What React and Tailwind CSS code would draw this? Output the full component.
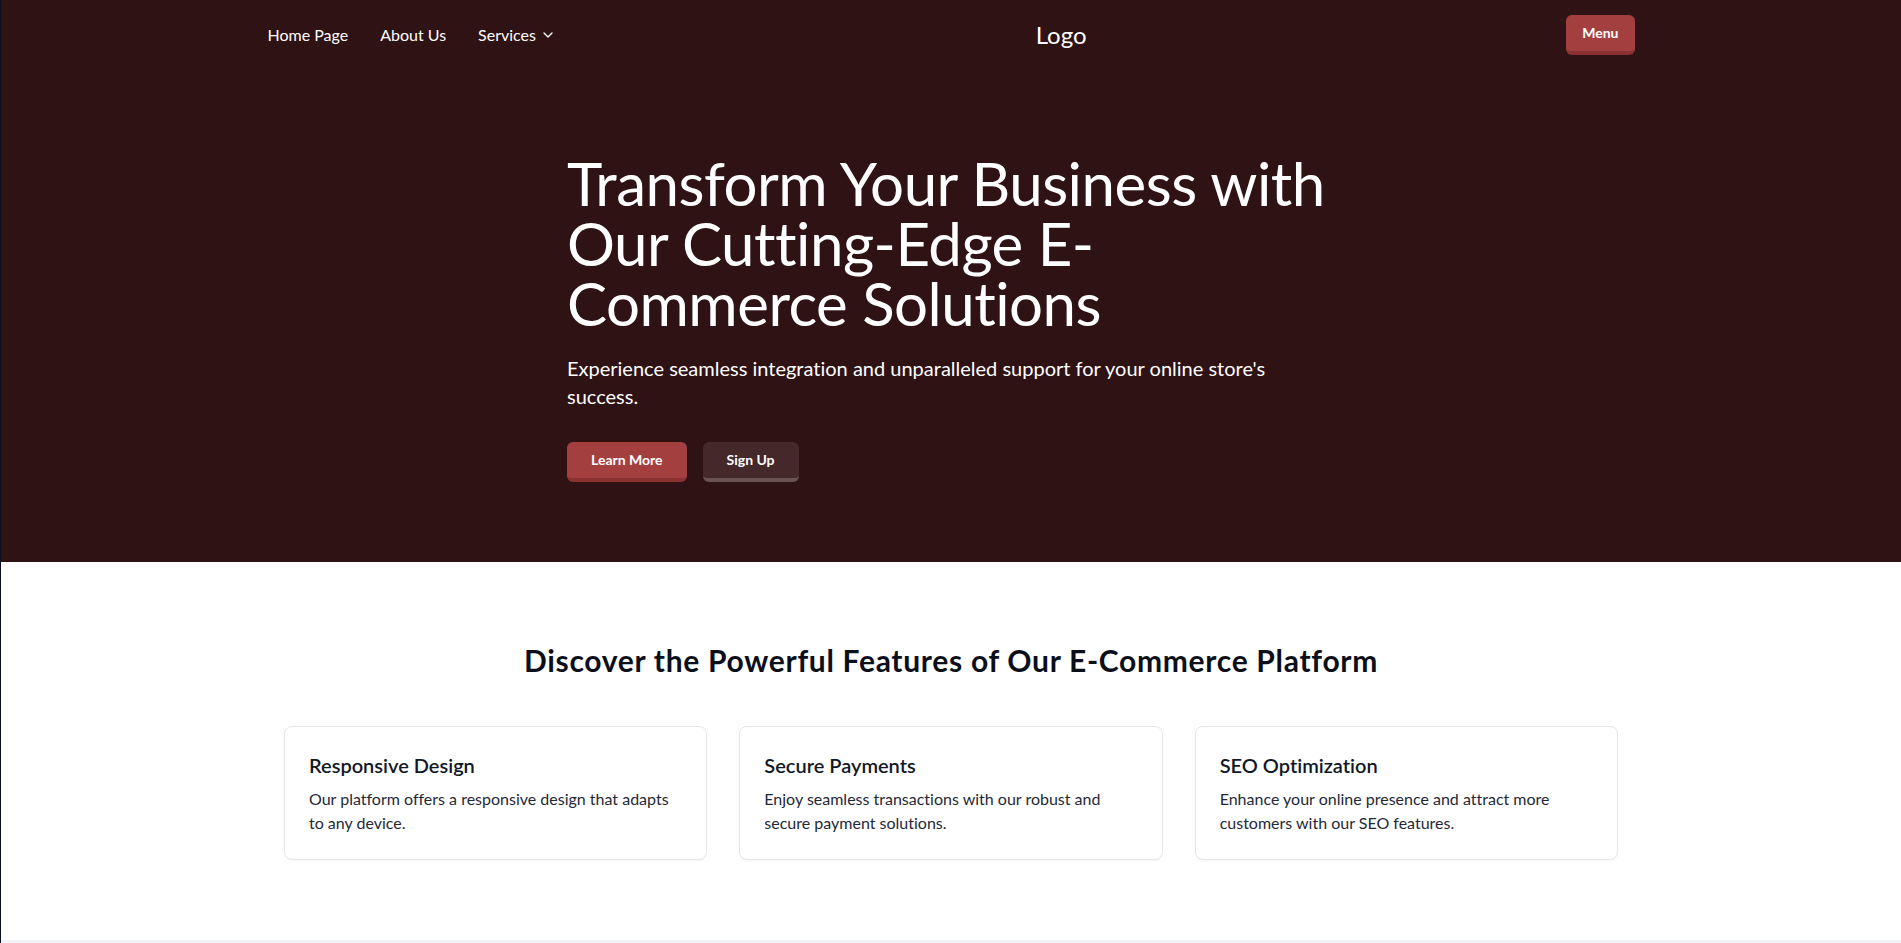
import React from "react";
import { ChevronDown } from "lucide-react";

const features = [
  {
    title: "Responsive Design",
    text: "Our platform offers a responsive design that adapts to any device.",
  },
  {
    title: "Secure Payments",
    text: "Enjoy seamless transactions with our robust and secure payment solutions.",
  },
  {
    title: "SEO Optimization",
    text: "Enhance your online presence and attract more customers with our SEO features.",
  },
];

export default function App() {
  return (
    <div
      className="min-h-screen border-l border-[#0b1020] bg-white [font-variant-ligatures:none]"
      style={{ fontFamily: "Lato, 'Noto Sans', sans-serif" }}
    >
      <header className="bg-[#2e1214] text-white">
        <nav className="mx-auto flex h-[70px] max-w-[1367px] items-center justify-between">
          <div className="flex items-center gap-8 text-base">
            <a href="#" className="text-white">Home Page</a>
            <a href="#" className="text-white">About Us</a>
            <button className="flex items-center text-white">
              Services
              <ChevronDown className="ml-1 h-4 w-4" strokeWidth={2} />
            </button>
          </div>
          <div className="text-2xl text-white">Logo</div>
          <button className="rounded-md border-b-4 border-[#8b3132] bg-[#a43f40] px-4 py-2 text-sm font-bold leading-5 text-white">
            Menu
          </button>
        </nav>

        <section className="mx-auto max-w-3xl pb-20 pt-[83px]">
          <h1 className="mb-[21px] text-6xl leading-none tracking-[-0.5px] text-white">
            Transform Your Business with Our Cutting-Edge E-Commerce Solutions
          </h1>
          <p className="text-xl leading-7 text-white">
            Experience seamless integration and unparalleled support for your online store's success.
          </p>
          <div className="mt-8 flex gap-4">
            <button className="rounded-md border-b-4 border-[#8b3132] bg-[#a43f40] px-6 py-2 text-sm font-bold leading-5 text-white">
              Learn More
            </button>
            <button className="rounded-md border-b-4 border-[#6b5353] bg-[#45282a] px-6 py-2 text-sm font-bold leading-5 text-white">
              Sign Up
            </button>
          </div>
        </section>
      </header>

      <section className="bg-white py-20">
        <h2 className="mb-12 text-center text-3xl font-bold leading-9 tracking-[0.7px] text-[#0b0f1a]">
          Discover the Powerful Features of Our E-Commerce Platform
        </h2>
        <div className="mx-auto grid max-w-[1334px] grid-cols-3 gap-8">
          {features.map((f) => (
            <div
              key={f.title}
              className="rounded-lg border border-[#e5e7eb] bg-white p-6 shadow-[0_1px_2px_rgba(0,0,0,0.04)]"
            >
              <h3 className="mb-2 text-xl font-semibold leading-7 text-[#111827]">{f.title}</h3>
              <p className="text-base leading-6 text-[#1f2937]">{f.text}</p>
            </div>
          ))}
        </div>
      </section>

      <section className="h-40 bg-[#f1f3f8]" />
    </div>
  );
}
